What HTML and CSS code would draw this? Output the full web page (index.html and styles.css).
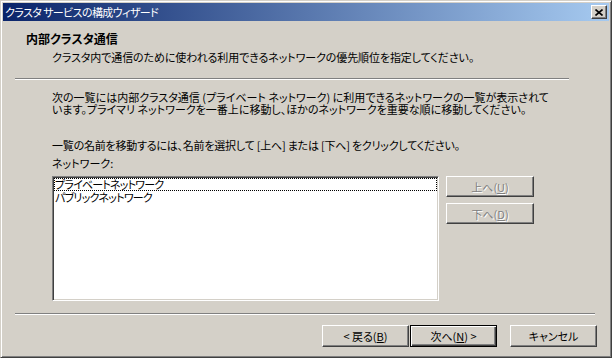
FILE: index.html
```html
<!DOCTYPE html>
<html lang="ja">
<head>
<meta charset="utf-8">
<title>クラスタ サービスの構成ウィザード</title>
<link rel="stylesheet" href="styles.css">
</head>
<body>
<div class="window">
  <div class="titlebar">
    <span class="title">クラスタ サービスの構成ウィザード</span>
    <span class="close"><svg width="8" height="7" viewBox="0 0 8 7"><path d="M0.5 0.5 L7.5 6.5 M7.5 0.5 L0.5 6.5" stroke="#000" stroke-width="1.6" fill="none"/></svg></span>
  </div>
  <div class="client">
    <div class="header">
      <div class="h-title">内部クラスタ通信</div>
      <div class="h-sub">クラスタ内で通信のために使われる利用できるネットワークの優先順位を指定してください。</div>
    </div>
    <div class="etch top-etch"></div>
    <div class="body">
      <p class="desc">次の一覧には内部クラスタ通信 (プライベート ネットワーク) に利用できるネットワークの一覧が表示されて<br>います。プライマリ ネットワークを一番上に移動し、ほかのネットワークを重要な順に移動してください。</p>
      <p class="hint">一覧の名前を移動するには、名前を選択して [上へ] または [下へ] をクリックしてください。</p>
      <div class="label">ネットワーク:</div>
      <div class="list-row">
        <div class="listbox">
          <div class="item focus">プライベートネットワーク</div>
          <div class="item">パブリックネットワーク</div>
        </div>
        <div class="side-buttons">
          <button class="btn" disabled>上へ(<u>U</u>)</button>
          <button class="btn" disabled>下へ(<u>D</u>)</button>
        </div>
      </div>
    </div>
    <div class="etch bottom-etch"></div>
    <div class="footer">
      <button class="btn back">&lt; 戻る(<u>B</u>)</button>
      <button class="btn default">次へ(<u>N</u>) &gt;</button>
      <button class="btn cancel">キャンセル</button>
    </div>
  </div>
</div>
</body>
</html>
```
FILE: styles.css
```css
html, body {
  margin: 0;
  padding: 0;
  background: #D4D0C8;
}
body {
  font-family: "Noto Sans CJK JP", "Liberation Sans", sans-serif;
  font-size: 11px;
  font-feature-settings: "palt";
  color: #000;
}
.window {
  width: 612px;
  height: 358px;
  box-sizing: border-box;
  background: #D4D0C8;
  border: 1px solid;
  border-color: #D4D0C8 #404040 #404040 #D4D0C8;
  box-shadow: inset 1px 1px #fff, inset -1px -1px #808080;
  padding: 2px;
  display: flex;
  flex-direction: column;
}
.titlebar {
  height: 18px;
  flex: none;
  background: linear-gradient(to right, #0A246A, #A6CAF0);
  display: flex;
  align-items: center;
  justify-content: space-between;
  padding: 0 2px 0 2px;
  color: #fff;
}
.title {
  line-height: 18px;
  letter-spacing: -0.6px;
}
.close {
  width: 16px;
  height: 14px;
  box-sizing: border-box;
  background: #D4D0C8;
  border: 1px solid;
  border-color: #fff #404040 #404040 #fff;
  box-shadow: inset -1px -1px #808080;
  display: flex;
  align-items: center;
  justify-content: center;
}
.close svg { display: block; margin-left: -1px; }
.client {
  flex: 1;
  display: flex;
  flex-direction: column;
}
.header {
  padding: 11px 0 0 23px;
}
.h-title {
  font-weight: bold;
  font-size: 12px;
  line-height: 14px;
}
.h-sub {
  margin-top: 4px;
  padding-left: 26px;
  line-height: 14px;
  letter-spacing: -0.1px;
}
.etch {
  height: 0;
  border-top: 1px solid #808080;
  border-bottom: 1px solid #fff;
}
.top-etch {
  margin: 14px 0 0 12px;
  width: 554px;
}
.body {
  padding: 11px 0 0 49px;
}
.desc {
  margin: 0;
  line-height: 12px;
}
.hint {
  margin: 24px 0 0 0;
  line-height: 12px;
  letter-spacing: -0.22px;
}
.label {
  margin-top: 6px;
  line-height: 12px;
}
.list-row {
  margin-top: 7px;
  display: flex;
}
.listbox {
  width: 387px;
  height: 125px;
  box-sizing: border-box;
  background: #fff;
  border: 1px solid;
  border-color: #808080 #fff #fff #808080;
  box-shadow: inset 1px 1px #404040, inset -1px -1px #D4D0C8;
  padding: 1px;
}
.item {
  height: 13px;
  line-height: 13px;
  padding-left: 1px;
  white-space: nowrap;
  letter-spacing: -0.8px;
}
.focus {
  outline: 1px dotted #000;
  outline-offset: -1px;
}
.side-buttons {
  margin-left: 7px;
  display: flex;
  flex-direction: column;
  gap: 6px;
}
.btn {
  width: 88px;
  height: 21px;
  box-sizing: border-box;
  padding: 0;
  margin: 0;
  font: inherit;
  font-feature-settings: "palt";
  color: #000;
  background: #D4D0C8;
  border: 1px solid;
  border-color: #fff #404040 #404040 #fff;
  box-shadow: inset -1px -1px #808080;
  line-height: 18px;
}
.btn:disabled {
  color: #808080;
  text-shadow: 1px 1px #fff;
}
.bottom-etch {
  margin: 12px 0 0 12px;
  width: 580px;
}
.footer {
  margin-top: 10px;
  display: flex;
  justify-content: flex-end;
  padding-right: 12px;
}
.footer .btn {
  width: 87px;
  height: 22px;
}
.default {
  margin-left: 1px;
  border: 1px solid #000;
  box-shadow: inset 1px 1px #fff, inset -1px -1px #404040, inset -2px -2px #808080;
}
.cancel {
  margin-left: 13px;
}
```
